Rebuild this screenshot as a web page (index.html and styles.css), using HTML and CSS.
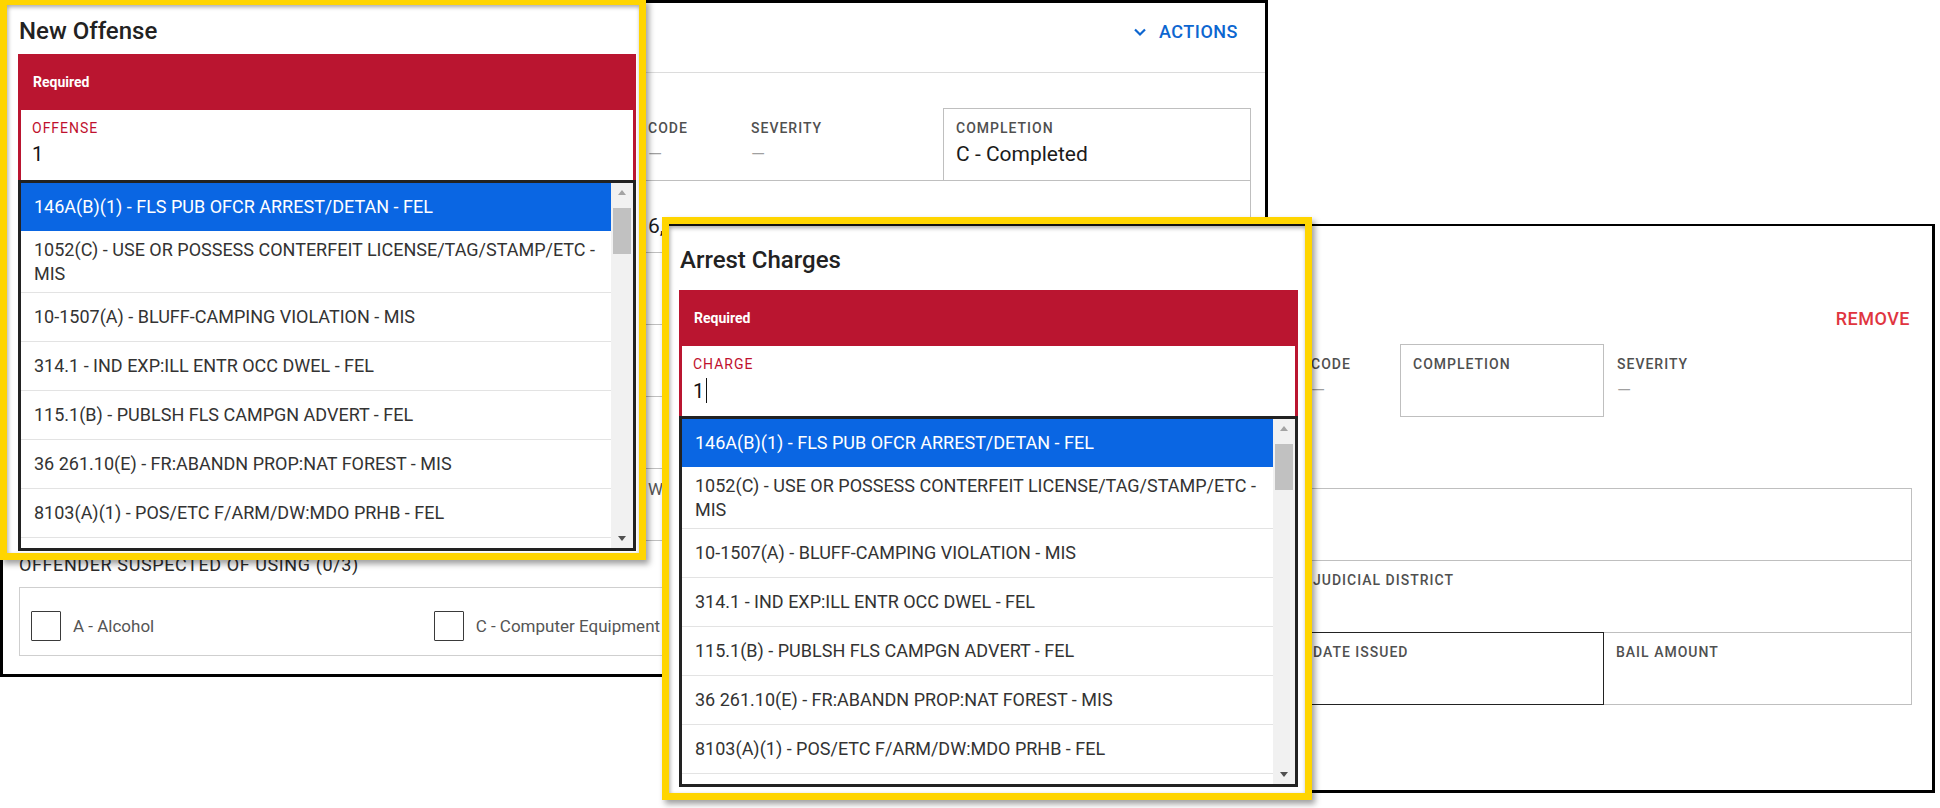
FILE: index.html
```html
<!DOCTYPE html>
<html lang="en">
<head>
<meta charset="utf-8">
<title>Offense and Arrest Charges</title>
<link rel="stylesheet" href="styles.css">
</head>
<body>
<div class="canvas">

  <section class="panel panel-offense">
    <header class="panel-head">
      <h2 class="panel-title">Offense 1</h2>
      <button class="actions-btn" type="button">
        <svg class="chev" width="14" height="9" viewBox="0 0 14 9"><polyline points="2,1.5 7,6.5 12,1.5" fill="none" stroke="currentColor" stroke-width="2.2"/></svg>
        <span>ACTIONS</span>
      </button>
    </header>
    <div class="panel-body">
      <div class="grid-row cols-offense">
        <div class="field"><div class="field-label">OFFENSE</div><div class="field-value">146A(B)(1) - FLS PUB OFCR ARREST/DETAN</div></div>
        <div class="field"><div class="field-label">CODE</div><div class="field-value empty">—</div></div>
        <div class="field"><div class="field-label">SEVERITY</div><div class="field-value empty">—</div></div>
        <div class="field boxed"><div class="field-label">COMPLETION</div><div class="field-value">C - Completed</div></div>
      </div>
      <div class="box-row cols-date">
        <div class="cell"><div class="field-label">INCIDENT DATE</div><div class="field-value right">06/01/2023 – 06/16,</div></div>
        <div class="cell"><div class="field-label">&nbsp;</div><div class="field-value">2023 10:30</div></div>
      </div>
      <div class="box-row"><div class="cell"><div class="field-label">LOCATION TYPE</div></div></div>
      <div class="box-row"><div class="cell"><div class="field-label">PREMISES ENTERED</div></div></div>
      <div class="box-row"><div class="cell"><div class="field-label">METHOD OF ENTRY</div></div></div>
      <div class="box-row cols-offense">
        <div class="cell"><div class="field-label">BIAS MOTIVATION</div></div>
        <div class="cell"><div class="cell-text">Weapon / Force Used</div></div>
      </div>
      <div class="section-label">OFFENDER SUSPECTED OF USING (0/3)</div>
      <div class="check-group">
        <label class="check"><span class="box"></span>A - Alcohol</label>
        <label class="check"><span class="box"></span>C - Computer Equipment</label>
        <label class="check"><span class="box"></span>D - Drugs/Narcotics</label>
      </div>
    </div>
  </section>

  <section class="panel panel-charge">
    <header class="panel-head">
      <h2 class="panel-title">Charge 1</h2>
      <button class="remove-btn" type="button">REMOVE</button>
    </header>
    <div class="panel-body">
      <div class="grid-row cols-charge">
        <div class="field"><div class="field-label">CHARGE</div><div class="field-value empty">—</div></div>
        <div class="field"><div class="field-label">CODE</div><div class="field-value empty">—</div></div>
        <div class="field boxed"><div class="field-label">COMPLETION</div><div class="field-value"></div></div>
        <div class="field"><div class="field-label">SEVERITY</div><div class="field-value empty">—</div></div>
      </div>
      <div class="box-row spaced"><div class="cell"><div class="field-label">ARREST TYPE</div></div></div>
      <div class="box-row cols-judicial">
        <div class="cell"><div class="field-label">CHARGE TYPE</div></div>
        <div class="cell"><div class="field-label">JUDICIAL DISTRICT</div></div>
      </div>
      <div class="grid-row cols-warrant">
        <div class="field boxed"><div class="field-label">WARRANT NUMBER</div></div>
        <div class="field dark"><div class="field-label">DATE ISSUED</div></div>
        <div class="field boxed overlap"><div class="field-label">BAIL AMOUNT</div></div>
      </div>
    </div>
  </section>

  <div class="callout callout-offense">
    <div class="dialog">
      <h3 class="dialog-title">New Offense</h3>
      <div class="req">
        <div class="req-head">Required</div>
        <div class="req-input">
          <div class="req-label">OFFENSE</div>
          <div class="req-value">1</div>
        </div>
      </div>
      <div class="options">
        <ul class="opt-list">
          <li class="opt selected">146A(B)(1) - FLS PUB OFCR ARREST/DETAN - FEL</li>
          <li class="opt">1052(C) - USE OR POSSESS CONTERFEIT LICENSE/TAG/STAMP/ETC - MIS</li>
          <li class="opt">10-1507(A) - BLUFF-CAMPING VIOLATION - MIS</li>
          <li class="opt">314.1 - IND EXP:ILL ENTR OCC DWEL - FEL</li>
          <li class="opt">115.1(B) - PUBLSH FLS CAMPGN ADVERT - FEL</li>
          <li class="opt">36 261.10(E) - FR:ABANDN PROP:NAT FOREST - MIS</li>
          <li class="opt">8103(A)(1) - POS/ETC F/ARM/DW:MDO PRHB - FEL</li>
          <li class="opt">148(A)(1) - OBSTRUCT/ETC PUB OFCR - MIS</li>
        </ul>
        <div class="scrollbar">
          <span class="sb-up"></span>
          <span class="sb-thumb"></span>
          <span class="sb-down"></span>
        </div>
      </div>
    </div>
  </div>

  <div class="callout callout-charge">
    <div class="dialog">
      <h3 class="dialog-title">Arrest Charges</h3>
      <div class="req">
        <div class="req-head">Required</div>
        <div class="req-input">
          <div class="req-label">CHARGE</div>
          <div class="req-value">1<span class="caret"></span></div>
        </div>
      </div>
      <div class="options">
        <ul class="opt-list">
          <li class="opt selected">146A(B)(1) - FLS PUB OFCR ARREST/DETAN - FEL</li>
          <li class="opt">1052(C) - USE OR POSSESS CONTERFEIT LICENSE/TAG/STAMP/ETC - MIS</li>
          <li class="opt">10-1507(A) - BLUFF-CAMPING VIOLATION - MIS</li>
          <li class="opt">314.1 - IND EXP:ILL ENTR OCC DWEL - FEL</li>
          <li class="opt">115.1(B) - PUBLSH FLS CAMPGN ADVERT - FEL</li>
          <li class="opt">36 261.10(E) - FR:ABANDN PROP:NAT FOREST - MIS</li>
          <li class="opt">8103(A)(1) - POS/ETC F/ARM/DW:MDO PRHB - FEL</li>
          <li class="opt">148(A)(1) - OBSTRUCT/ETC PUB OFCR - MIS</li>
        </ul>
        <div class="scrollbar">
          <span class="sb-up"></span>
          <span class="sb-thumb"></span>
          <span class="sb-down"></span>
        </div>
      </div>
    </div>
  </div>

</div>
</body>
</html>
```

FILE: styles.css
```css
* { box-sizing: border-box; }

html, body {
  margin: 0;
  padding: 0;
}

body {
  width: 1940px;
  height: 808px;
  overflow: hidden;
  background: #ffffff;
  font-family: Roboto, "Noto Sans", "Liberation Sans", sans-serif;
  color: #222222;
}

.canvas {
  position: relative;
  width: 1940px;
  height: 808px;
  overflow: hidden;
}

/* ---------- background panels ---------- */
.panel {
  position: absolute;
  display: flex;
  flex-direction: column;
  background: #ffffff;
  border: 3px solid #000000;
}

.panel-offense {
  left: 0;
  top: 0;
  width: 1268px;
  height: 677px;
  z-index: 1;
}

.panel-charge {
  left: 1000px;
  top: 224px;
  width: 935px;
  height: 569px;
  border-top-width: 2px;
  z-index: 2;
}

.panel-head {
  display: flex;
  justify-content: space-between;
  align-items: flex-start;
}

.panel-offense .panel-head {
  height: 70px;
  padding: 18px 27px 0 16px;
  border-bottom: 1px solid #dcdcdc;
}

.panel-charge .panel-head {
  height: 104px;
  padding: 82px 22px 0 16px;
}

.panel-title {
  margin: 0;
  font-size: 20px;
  line-height: 24px;
  font-weight: 500;
  color: #222222;
}

.actions-btn,
.remove-btn {
  display: flex;
  align-items: center;
  margin: 0;
  padding: 0;
  border: 0;
  background: none;
  font-family: inherit;
  font-size: 18px;
  line-height: 22px;
  font-weight: 500;
  letter-spacing: 0.5px;
}

.actions-btn {
  gap: 12px;
  color: #0d66d0;
}

.chev { display: block; }

.remove-btn { color: #e0353f; }

.panel-body {
  display: flex;
  flex-direction: column;
}

.panel-offense .panel-body { padding: 35px 14px 0 16px; }
.panel-charge .panel-body { padding: 14px 20px 0 16px; }

.grid-row { display: grid; }

.cols-offense { grid-template-columns: 616px 103px 205px 308px; }
.cols-charge { grid-template-columns: 279px 102px 204px 308px; }
.cols-date { grid-template-columns: 644px 1fr; }
.cols-judicial { grid-template-columns: 281px 1fr; }
.cols-warrant { grid-template-columns: 281px 304px 1fr; margin-top: -1px; }

.field {
  height: 73px;
  padding: 11px 12px 0;
  border: 1px solid transparent;
  overflow: hidden;
  white-space: nowrap;
  background: #ffffff;
}

.field.boxed { border-color: #bfbfbf; }
.field.dark { border-color: #222222; position: relative; z-index: 1; }
.field.overlap { margin-left: -1px; }
.cols-warrant .field.boxed:first-child { margin-right: -1px; }

.box-row {
  display: grid;
  height: 73px;
  margin-top: -1px;
  border: 1px solid #bfbfbf;
}

.box-row.spaced { margin-top: 71px; }

.cell {
  padding: 11px 12px 0;
  overflow: hidden;
  white-space: nowrap;
}

.cols-date .cell:first-child { padding-right: 0; }

.field-label {
  font-size: 14px;
  line-height: 16px;
  letter-spacing: 1px;
  font-weight: 500;
  color: #505050;
}

.field-value {
  margin-top: 6px;
  font-size: 21px;
  line-height: 24px;
  min-height: 24px;
  color: #1b1b1b;
}

.field-value.empty {
  font-size: 18px;
  color: #a0a0a0;
}

.field-value.right { text-align: right; }

.cell-text {
  font-size: 17px;
  line-height: 20px;
  color: #555555;
  margin-top: -1px;
}

.section-label {
  margin-top: 13px;
  font-size: 18px;
  line-height: 22px;
  font-weight: 400;
  letter-spacing: 0.6px;
  color: #2a2a2a;
}

.check-group {
  margin-top: 11px;
  height: 69px;
  padding: 23px 11px 0;
  border: 1px solid #cfcfcf;
  display: grid;
  grid-template-columns: repeat(3, 1fr);
}

.check {
  display: flex;
  align-items: center;
  gap: 12px;
  height: 30px;
  font-size: 17px;
  color: #555555;
  white-space: nowrap;
}

.box {
  width: 30px;
  height: 30px;
  border: 1.5px solid #3a3a3a;
  border-radius: 1px;
  flex: none;
}

/* ---------- highlighted dialogs ---------- */
.callout {
  position: absolute;
  border: 7px solid #ffd500;
  background: #ffffff;
  box-shadow: 3px 4px 6px rgba(0, 0, 0, 0.38);
  z-index: 5;
}

.callout-offense {
  left: 0;
  top: -2px;
  width: 646px;
  height: 562px;
}

.callout-charge {
  left: 662px;
  top: 217px;
  width: 650px;
  height: 583px;
}

.dialog {
  height: 100%;
  display: flex;
  flex-direction: column;
  box-shadow: inset 1px 2px 4px rgba(0, 0, 0, 0.35);
}

.callout-offense .dialog { padding: 12px 3px 0 11px; }
.callout-charge .dialog { padding: 20px 7px 0 10px; border-top: 2px solid #111111; }

.dialog-title {
  margin: 0 0 0 1px;
  font-size: 24px;
  line-height: 28px;
  font-weight: 500;
  color: #222222;
}

.callout-offense .dialog-title { margin-bottom: 9px; }
.callout-charge .dialog-title { margin-bottom: 16px; }

.req {
  background: #ba1530;
  padding: 0 3px;
}

.req-head {
  height: 56px;
  display: flex;
  align-items: center;
  padding-left: 12px;
  color: #ffffff;
  font-size: 14px;
  font-weight: 700;
}

.req-input {
  height: 70px;
  padding: 10px 11px 0;
  background: #ffffff;
}

.req-label {
  font-size: 14px;
  line-height: 16px;
  letter-spacing: 1px;
  color: #c0102e;
}

.req-value {
  display: flex;
  align-items: center;
  margin-top: 6px;
  font-size: 20px;
  line-height: 24px;
  color: #111111;
}

.caret {
  width: 1px;
  height: 25px;
  margin-left: 2px;
  background: #111111;
}

.options {
  display: flex;
  height: 371px;
  border: 3px solid #222222;
  background: #ffffff;
}

.opt-list {
  flex: 1;
  margin: 0;
  padding: 0;
  list-style: none;
  overflow: hidden;
}

.opt {
  display: flex;
  align-items: center;
  min-height: 49px;
  padding: 6px 4px 6px 13px;
  border-bottom: 1px solid #e3e3e3;
  font-size: 18px;
  line-height: 24px;
  color: #333333;
}

.opt.selected {
  background: #0a66e3;
  color: #ffffff;
  border-bottom-color: #ffffff;
}

.scrollbar {
  width: 22px;
  flex: none;
  display: flex;
  flex-direction: column;
  align-items: center;
  background: #f1f1f1;
}

.sb-up,
.sb-down {
  width: 0;
  height: 0;
  border-left: 4.5px solid transparent;
  border-right: 4.5px solid transparent;
}

.sb-up {
  margin-top: 7px;
  border-bottom: 5px solid #a3a3a3;
}

.sb-thumb {
  width: 18px;
  height: 46px;
  margin-top: 13px;
  background: #c1c1c1;
}

.sb-down {
  margin-top: auto;
  margin-bottom: 7px;
  border-top: 5px solid #505050;
}
```
